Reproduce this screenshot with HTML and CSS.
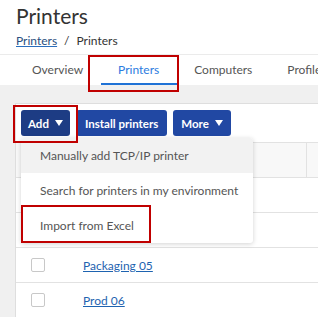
FILE: index.html
```html
<!DOCTYPE html>
<html>
<head>
<meta charset="utf-8">
<link rel="stylesheet" href="styles.css">
</head>
<body>
<div class="page">
  <header class="header">
    <h1 class="title">Printers</h1>
    <nav class="crumbs"><a class="crumb-link" href="#">Printers</a><span class="crumb-sep">/</span><span class="crumb-current">Printers</span></nav>
  </header>
  <nav class="tabs">
    <a class="tab" href="#">Overview</a>
    <a class="tab tab-active" href="#">Printers</a>
    <a class="tab" href="#">Computers</a>
    <a class="tab" href="#">Profiles</a>
  </nav>
  <main class="main">
    <section class="panel">
      <div class="toolbar">
        <button class="btn btn-pressed">Add <span class="caret"></span></button>
        <button class="btn btn-install">Install printers</button>
        <button class="btn">More <span class="caret"></span></button>
      </div>
      <div class="table">
        <div class="row row-head"><div class="cell-check"></div><div class="cell-name"></div><div class="cell-extra"></div></div>
        <div class="row"><div class="cell-check"><span class="checkbox"></span></div><div class="cell-name"></div></div>
        <div class="row"><div class="cell-check"><span class="checkbox"></span></div><div class="cell-name"></div></div>
        <div class="row"><div class="cell-check"><span class="checkbox"></span></div><div class="cell-name"><a class="link" href="#">Packaging 05</a></div></div>
        <div class="row"><div class="cell-check"><span class="checkbox"></span></div><div class="cell-name"><a class="link" href="#">Prod 06</a></div></div>
      </div>
    </section>
  </main>

  <ul class="menu">
    <li class="menu-item menu-item-hover">Manually add TCP/IP printer</li>
    <li class="menu-item">Search for printers in my environment</li>
    <li class="menu-item">Import from Excel</li>
  </ul>

  <div class="mark mark-tab"></div>
  <div class="mark mark-add"></div>
  <div class="mark mark-import"></div>
</div>
</body>
</html>
```
FILE: styles.css
```css
* { box-sizing: border-box; }
html, body { margin: 0; padding: 0; }
body {
  font-family: "Lato", "Open Sans", sans-serif;
  font-size: 12px;
  color: #333;
  background: #f0f0f0;
  width: 318px;
  height: 317px;
  overflow: hidden;
}
.page { position: relative; width: 318px; height: 317px; overflow: hidden; }

.header { background: #fff; padding: 0 16px; height: 54px; }
.title {
  margin: 0;
  padding-top: 3px;
  font-size: 21px;
  font-weight: 400;
  line-height: 26px;
  color: #333;
}
.crumbs { margin-top: 4px; font-size: 12px; line-height: 16px; display: flex; gap: 7px; }
.crumb-link { color: #2a4f80; text-decoration: underline; text-decoration-color: #2a6ebd; }
.crumb-current { color: #333; }

.tabs {
  background: #fff;
  border-top: 1px solid #ebebeb;
  height: 31px;
  display: flex;
  padding-left: 14.5px;
}
.tab {
  display: block;
  padding: 0 17.5px;
  line-height: 29px;
  color: #555;
  text-decoration: none;
  border-bottom: 2px solid transparent;
  white-space: nowrap;
  font-size: 12px;
}
.tab-active { color: #2b7be0; border-bottom-color: #1f72d6; }

.main { padding: 18px 0 0 15px; }
.panel { background: #fff; border-top: 1px solid #dedede; border-left: 1px solid #dedede; height: 220px; }
.toolbar { display: flex; gap: 6px; padding: 6px 0 0 5px; height: 38px; }
.btn {
  font-family: inherit;
  font-size: 11.5px;
  font-weight: 700;
  color: #fff;
  background: #2148a3;
  border: 0;
  border-radius: 3px;
  height: 26px;
  padding: 0 8px;
  display: flex;
  align-items: center;
  gap: 6px;
}
.btn-install { padding: 0 9px; }
.btn-pressed { background: #1d3c84; padding: 0 7px; }
.caret {
  width: 0; height: 0;
  border-left: 4px solid transparent;
  border-right: 4px solid transparent;
  border-top: 6px solid #fff;
}

.table { border-top: 1px solid #e2e2e2; }
.row { display: flex; height: 35px; border-bottom: 1px solid #e2e2e2; align-items: center; }
.row-head { background: #f8f8f8; height: 35px; }
.cell-check { width: 67px; padding-left: 15px; display: flex; align-items: center; }
.cell-name { flex: 1; align-self: stretch; display: flex; align-items: center; }
.cell-extra { width: 12px; align-self: stretch; border-left: 1px solid #e2e2e2; }
.checkbox { width: 14px; height: 14px; border: 1px solid #c8c8c8; border-radius: 2px; background: #fff; }
.link { color: #1e63b0; text-decoration: underline; }

.menu {
  position: absolute;
  left: 21px;
  top: 138px;
  width: 232px;
  margin: 0;
  padding: 0;
  list-style: none;
  background: #fff;
  border-radius: 3px;
  box-shadow: 0 1px 5px rgba(0,0,0,0.18);
}
.menu-item { height: 35px; line-height: 35px; padding-left: 19px; color: #555; white-space: nowrap; }
.menu-item-hover { background: #f2f2f2; border-radius: 3px 3px 0 0; }

.mark { position: absolute; border: 2px solid #c00000; }
.mark-tab { left: 88px; top: 55px; width: 91px; height: 37px; }
.mark-add { left: 13px; top: 105px; width: 65px; height: 38px; }
.mark-import { left: 21px; top: 205px; width: 130px; height: 38px; }
```
